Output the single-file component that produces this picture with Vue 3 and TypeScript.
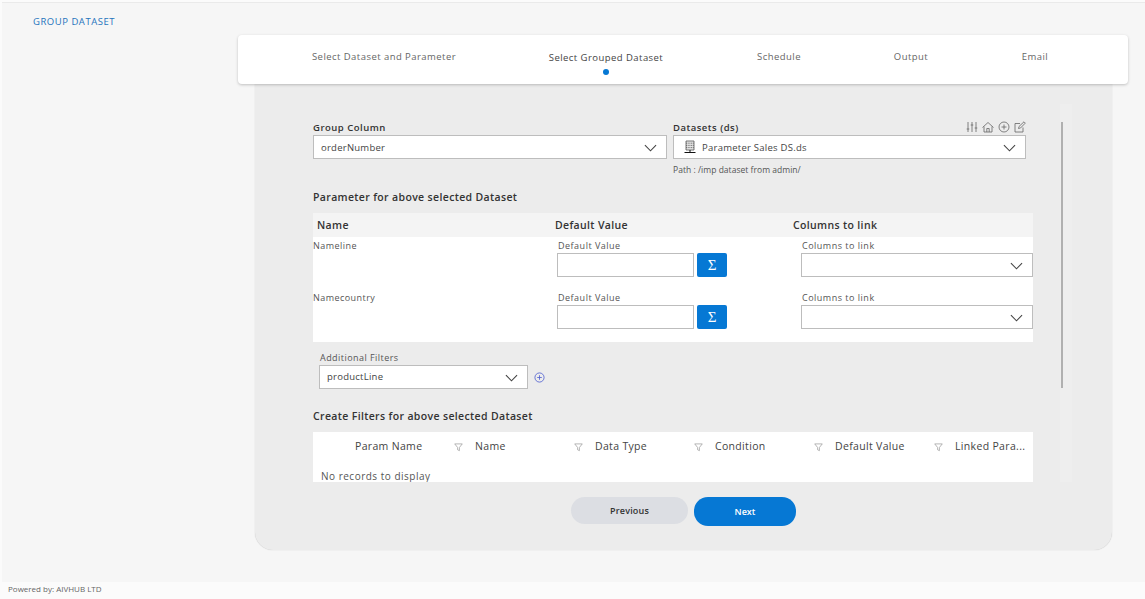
<script setup lang="ts">
const steps = [
  { label: 'Select Dataset and Parameter', active: false },
  { label: 'Select Grouped Dataset', active: true },
  { label: 'Schedule', active: false },
  { label: 'Output', active: false },
  { label: 'Email', active: false },
]
const params = ['Nameline', 'Namecountry']
const cols = ['Param Name', 'Name', 'Data Type', 'Condition', 'Default Value', 'Linked Para...']
</script>

<template>
  <div class="page">
    <main class="main">
      <h1 class="title">GROUP DATASET</h1>
      <nav class="stepper">
        <div v-for="s in steps" :key="s.label" class="step" :class="{ active: s.active }">
          <span>{{ s.label }}</span>
          <i v-if="s.active" class="dot"></i>
        </div>
      </nav>
      <section class="card">
        <div class="scroll">
          <div class="form">
            <div class="two">
              <div class="field">
                <label class="blabel">Group Column</label>
                <div class="select wide"><span>orderNumber</span>
                  <svg class="chev" viewBox="0 0 14 8"><path d="M1 1l6 6 6-6" /></svg>
                </div>
              </div>
              <div class="field">
                <div class="dshead">
                  <label class="blabel">Datasets (ds)</label>
                  <div class="tools">
                    <svg viewBox="0 0 12 12"><path d="M2 1v10M6 1v10M10 1v10M.7 8h2.600M4.700 4h2.600M8.700 7h2.600" /></svg>
                    <svg viewBox="0 0 12 12"><path d="M.5 6.500L6 1.500l5.500 5M2 5.500V11h8V5.500M4.800 11V7.500h2.400V11" /></svg>
                    <svg viewBox="0 0 12 12"><circle cx="6" cy="6" r="5" /><path d="M6 3.500v5M3.500 6h5" /></svg>
                    <svg viewBox="0 0 12 12"><path d="M9 6.500V11H1V2.500h5M4.500 7.500l.5-2L10 .8l1.300 1.300L6.500 7z" /></svg>
                  </div>
                </div>
                <div class="select ds">
                  <svg class="dbicon" viewBox="0 0 12 14">
                    <path d="M2 1h8v9H2z" />
                    <path d="M2 3.200h8M2 5.400h8M2 7.600h8" stroke-dasharray="1 .7" />
                    <path class="base" d="M6 10v2.500M.5 12.500h11" />
                  </svg>
                  <span>Parameter Sales DS.ds</span>
                  <svg class="chev" viewBox="0 0 14 8"><path d="M1 1l6 6 6-6" /></svg>
                </div>
                <p class="path">Path : /imp dataset from admin/</p>
              </div>
            </div>

            <h2 class="section first">Parameter for above selected Dataset</h2>
            <div class="ptable">
              <div class="phead">
                <span>Name</span><span>Default Value</span><span>Columns to link</span>
              </div>
              <div v-for="p in params" :key="p" class="prow">
                <div class="pname">{{ p }}</div>
                <div class="pcell">
                  <label>Default Value</label>
                  <div class="inline">
                    <input class="input" type="text" />
                    <button class="sigma" type="button">Σ</button>
                  </div>
                </div>
                <div class="pcell link">
                  <label>Columns to link</label>
                  <div class="select"><span></span>
                    <svg class="chev" viewBox="0 0 14 8"><path d="M1 1l6 6 6-6" /></svg>
                  </div>
                </div>
              </div>
            </div>

            <div class="additional">
              <label>Additional Filters</label>
              <div class="addrow">
                <div class="select add"><span>productLine</span>
                  <svg class="chev" viewBox="0 0 14 8"><path d="M1 1l6 6 6-6" /></svg>
                </div>
                <svg class="plus" viewBox="0 0 12 12"><circle cx="6" cy="6" r="5" /><path d="M6 3.500v5M3.500 6h5" /></svg>
              </div>
            </div>

            <h2 class="section second">Create Filters for above selected Dataset</h2>
            <div class="grid">
              <div class="ghead">
                <div v-for="c in cols" :key="c" class="gcol">
                  <span>{{ c }}</span>
                  <svg v-if="c !== 'Linked Para...'" class="funnel" viewBox="0 0 10 10"><path d="M.8 1h8.400L6 5v3.500L4 7.500V5z" /></svg>
                </div>
              </div>
              <div class="gbody">No records to display</div>
            </div>
          </div>
          <div class="bar"><i></i></div>
        </div>
        <div class="actions">
          <button class="btn prev" type="button">Previous</button>
          <button class="btn next" type="button">Next</button>
        </div>
      </section>
    </main>
    <footer class="foot">Powered by: AIVHUB LTD</footer>
  </div>
</template>

<style>
html, body { margin: 0; padding: 0; background: #fbfbfb; }
</style>

<style scoped>
.page {
  width: 1145px;
  height: 599px;
  overflow: hidden;
  font-family: "Open Sans", "Noto Sans", sans-serif;
  color: #333;
  display: flex;
  flex-direction: column;
  padding-left: 2px;
  box-sizing: border-box;
}
.main {
  height: 580px;
  margin-top: 2px;
  background: #f6f6f6;
  border-top: 1px solid #eaeaea;
  box-sizing: border-box;
  padding-top: 12px;
  flex: none;
}
.title {
  margin: 0 0 0 31px;
  font-size: 9.500px;
  line-height: 14px;
  font-weight: 400;
  letter-spacing: .53px;
  color: #1f74bd;
}
.stepper {
  position: relative;
  z-index: 1;
  margin: 6px 0 0 236px;
  width: 890px;
  height: 49px;
  box-sizing: border-box;
  background: #fff;
  border-radius: 4px;
  box-shadow: 0 1px 3px rgba(0,0,0,.22);
  display: grid;
  grid-template-columns: 292px 152px 194px 70px 178px;
}
.step {
  font-size: 9.500px;
  line-height: 14px;
  letter-spacing: .45px;
  color: #666;
  text-align: center;
  padding-top: 15px;
  display: flex;
  flex-direction: column;
  align-items: center;
  white-space: nowrap;
}
.step.active { color: #444; padding-top: 16px; }
.dot {
  width: 6px;
  height: 6px;
  border-radius: 50%;
  background: #0678d4;
  margin-top: 4px;
}
.card {
  width: 857px;
  height: 466px;
  margin-left: 253px;
  box-sizing: border-box;
  background: #ececec;
  border-radius: 0 0 18px 18px;
  box-shadow: 0 0 1px rgba(0,0,0,.25);
  padding-top: 20px;
}
.scroll {
  display: flex;
  height: 378px;
  overflow: hidden;
}
.form {
  width: 720px;
  margin-left: 58px;
  flex: none;
}
.two {
  display: grid;
  grid-template-columns: 354px 353px;
  gap: 6px;
}
.blabel {
  display: block;
  font-size: 9.500px;
  line-height: 14px;
  font-weight: 600;
  letter-spacing: .5px;
  color: #333;
  height: 14px;
  margin-top: 17px;
}
.dshead { display: flex; justify-content: space-between; align-items: flex-end; }
.tools {
  display: flex;
  gap: 4px;
  margin-bottom: 2px;
}
.tools svg {
  width: 12px;
  height: 12px;
  fill: none;
  stroke: #666;
  stroke-width: .8;
}
.select {
  height: 24px;
  box-sizing: border-box;
  background: #fff;
  border: 1px solid #bdbdbd;
  display: flex;
  align-items: center;
  padding: 0 7px;
  font-size: 9.500px;
  letter-spacing: .25px;
  color: #444;
  position: relative;
}
.chev {
  position: absolute;
  right: 9px;
  top: 8px;
  width: 13px;
  height: 8px;
  fill: none;
  stroke: #444;
  stroke-width: 1.200;
}
.ds { padding-left: 10px; gap: 6px; }
.dbicon {
  width: 12px;
  height: 14px;
  fill: #e4e4e4;
  stroke: #555;
  stroke-width: .8;
}
.dbicon .base { stroke: #111; stroke-width: 1; }
.path {
  margin: 5px 0 0;
  font-size: 8.500px;
  line-height: 12px;
  letter-spacing: .03px;
  color: #555;
}
.section {
  margin: 0;
  font-size: 10.500px;
  line-height: 14px;
  font-weight: 600;
  letter-spacing: .35px;
  color: #333;
}
.section.first { margin-top: 14px; }
.section.second { margin-top: 20px; }
.ptable {
  margin-top: 9px;
  background: #fff;
  height: 129px;
}
.phead {
  height: 24px;
  background: #f4f4f4;
  display: grid;
  grid-template-columns: 238px 238px 1fr;
  padding-left: 4px;
  align-items: center;
  font-size: 10.500px;
  font-weight: 600;
  letter-spacing: .35px;
  color: #333;
}
.prow {
  display: grid;
  grid-template-columns: 244px 244px 232px;
  height: 52px;
}
.pname {
  padding: 2px 0 0;
  font-size: 9px;
  line-height: 13px;
  letter-spacing: .45px;
  color: #555;
}
.pcell { padding-top: 2px; }
.pcell label {
  display: block;
  padding-left: 1px;
  font-size: 9px;
  line-height: 13px;
  letter-spacing: .5px;
  color: #555;
  margin-bottom: 1px;
}
.inline { display: flex; gap: 3px; }
.input {
  width: 137px;
  height: 24px;
  box-sizing: border-box;
  border: 1px solid #bdbdbd;
  background: #fff;
  padding: 0;
  margin: 0;
  outline: none;
}
.sigma {
  width: 30px;
  height: 24px;
  border: 0;
  padding: 0;
  border-radius: 2px;
  background: #0678d4;
  color: #fff;
  font-family: "Liberation Serif", serif;
  font-size: 15px;
}
.additional { margin-top: 9px; padding-left: 6px; }
.additional label {
  display: block;
  padding-left: 1px;
  font-size: 9px;
  line-height: 13px;
  letter-spacing: .45px;
  color: #555;
  margin-bottom: 1px;
}
.addrow { display: flex; align-items: center; gap: 6px; }
.add { width: 209px; padding-bottom: 2px; }
.plus {
  width: 11px;
  height: 11px;
  fill: none;
  stroke: #4f5fd0;
  stroke-width: .9;
}
.grid {
  margin-top: 9px;
  background: #fff;
  height: 60px;
  overflow: hidden;
}
.ghead {
  display: grid;
  grid-template-columns: 150px 120px 120px 120px 120px 90px;
  height: 27px;
}
.gcol {
  position: relative;
  display: flex;
  align-items: center;
  font-size: 10.500px;
  letter-spacing: .33px;
  color: #444;
  padding-left: 42px;
  white-space: nowrap;
}
.gcol:nth-child(n+2) { padding-left: 12px; }
.funnel {
  position: absolute;
  right: 0;
  top: 11px;
  width: 9px;
  height: 9px;
  fill: none;
  stroke: #999;
  stroke-width: .8;
}
.gbody {
  padding: 10px 0 0 8px;
  font-size: 10px;
  line-height: 14px;
  color: #555;
  letter-spacing: .5px;
}
.bar {
  margin-left: 27px;
  width: 12px;
  padding-left: 1px;
  box-sizing: border-box;
  height: 100%;
  background: #eeeeee;
}
.bar i {
  display: block;
  margin-top: 18px;
  width: 2px;
  height: 266px;
  background: #b0b0b0;
}
.actions {
  margin-top: 15px;
  display: flex;
  align-items: flex-start;
  gap: 6px;
  padding-left: 316px;
}
.btn {
  border: 0;
  font-family: inherit;
  font-size: 9px;
  font-weight: 600;
  border-radius: 14px;
  padding: 0;
}
.prev { width: 117px; height: 27px; background: #dcdee3; color: #333; letter-spacing: .2px; }
.next { width: 102px; height: 29px; background: #0678d4; color: #fff; }
.foot {
  flex: 1;
  font-size: 8px;
  line-height: 14px;
  padding: 0 0 0 6px;
  color: #666;
}
</style>
